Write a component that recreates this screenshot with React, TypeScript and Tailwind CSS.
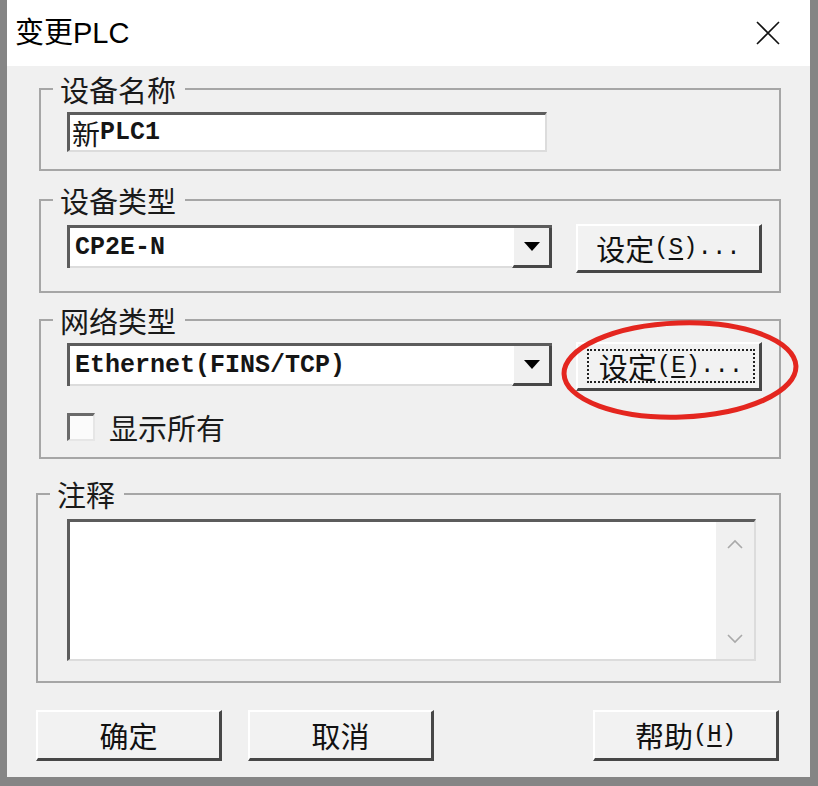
import React from "react";

const CJK = "font-['Noto_Sans_CJK_SC',sans-serif]";
const MONO = "font-['Liberation_Mono','Noto_Sans_CJK_SC',monospace]";

function Legend({ children }: { children: React.ReactNode }) {
  return (
    <legend
      className={`ml-[12px] pl-[7px] pr-[9px] text-[29px] leading-[30px] text-[#1a1a1a] ${CJK}`}
    >
      {children}
    </legend>
  );
}

function Combo({ value }: { value: string }) {
  return (
    <div className="mt-[1px] flex h-[43px] w-[485px] border-t-[3px] border-l-[3px] border-[#5c5c5c]">
      <div
        className={`flex flex-1 items-center bg-white pl-[5px] pt-[2px] border-b-2 border-[#dcdcdc] text-[25px] font-bold text-[#151515] ${MONO}`}
      >
        {value}
      </div>
      <div className="flex w-[40px] items-center justify-center bg-[#f0f0f0] border-l-2 border-l-white border-r-[3px] border-b-[3px] border-r-[#474747] border-b-[#474747]">
        <svg width="16" height="9" viewBox="0 0 16 9">
          <path d="M0 0H16L8 9Z" fill="#000" />
        </svg>
      </div>
    </div>
  );
}

function Chevron({ up }: { up?: boolean }) {
  return (
    <svg width="16" height="10" viewBox="0 0 16 10">
      <polyline
        points={up ? "1,9 8,2 15,9" : "1,1 8,8 15,1"}
        fill="none"
        stroke="#a9a9a9"
        strokeWidth="1.6"
      />
    </svg>
  );
}

export default function App() {
  return (
    <div className="flex h-[786px] w-[818px] flex-col overflow-hidden border-l-[7px] border-r-[8px] border-b-[9px] border-[#858585] bg-[#f0f0f0]">
      {/* Title bar */}
      <div className="flex h-[66px] shrink-0 items-center justify-between bg-white pl-[8px] pr-[30px]">
        <div
          className={`text-[29px] leading-none text-black font-['Liberation_Sans','Noto_Sans_CJK_SC',sans-serif]`}
        >
          变更PLC
        </div>
        <svg width="24" height="24" viewBox="0 0 24 24">
          <path d="M1 1L23 23M23 1L1 23" stroke="#111" strokeWidth="1.6" />
        </svg>
      </div>

      <div className="flex flex-1 flex-col pl-[32px] pr-[29px]">
        {/* 设备名称 */}
        <fieldset className="mt-[8px] border-2 border-[#a6a6a6]">
          <Legend>设备名称</Legend>
          <div className="pt-[8px] pl-[26px] pb-[17px]">
            <div
              className={`flex h-[40px] w-[480px] items-center bg-white pl-[2px] border-t-[3px] border-l-[3px] border-r-2 border-b-2 border-t-[#5c5c5c] border-l-[#5c5c5c] border-r-[#dcdcdc] border-b-[#dcdcdc] text-[25px] font-bold text-[#151515] ${MONO}`}
            >
              <span className={`text-[28px] font-normal leading-none ${CJK}`}>新</span>
              <span>PLC1</span>
            </div>
          </div>
        </fieldset>

        {/* 设备类型 */}
        <fieldset className="mt-[14px] border-2 border-[#a6a6a6]">
          <Legend>设备类型</Legend>
          <div className="flex items-start gap-[24px] pt-[9px] pl-[26px] pb-[18px]">
            <Combo value="CP2E-N" />
            <div className="flex h-[49px] w-[186px] items-center justify-center bg-[#f2f2f2] border-t-2 border-l-2 border-t-white border-l-white border-r-[3px] border-b-[3px] border-r-[#474747] border-b-[#474747] text-[#111]">
              <span className={`text-[29px] leading-none ${CJK}`}>设定</span>
              <span className={`text-[24px] leading-none ${MONO}`}>
                (<span className="underline underline-offset-4">S</span>)...
              </span>
            </div>
          </div>
        </fieldset>

        {/* 网络类型 */}
        <fieldset className="mt-[12px] border-2 border-[#a6a6a6]">
          <Legend>网络类型</Legend>
          <div className="pt-[7px] pl-[26px] pb-[15px]">
            <div className="flex items-start gap-[24px]">
              <Combo value="Ethernet(FINS/TCP)" />
              <div className="relative">
                <div className="flex h-[49px] w-[186px] bg-[#f2f2f2] border-t-2 border-l-2 border-t-white border-l-white border-r-[3px] border-b-[3px] border-r-[#474747] border-b-[#474747] pt-[5px] pl-[9px] pr-[4px] pb-[5px] text-[#111]">
                  <div className="flex flex-1 items-center justify-center border-2 border-dotted border-[#222]">
                    <span className={`text-[29px] leading-none ${CJK}`}>设定</span>
                    <span className={`text-[24px] leading-none ${MONO}`}>
                      (<span className="underline underline-offset-4">E</span>)...
                    </span>
                  </div>
                </div>
                <svg
                  className="pointer-events-none absolute left-[-20px] top-[-30px]"
                  width="250"
                  height="112"
                  viewBox="0 0 250 112"
                >
                  <ellipse
                    cx="124"
                    cy="58"
                    rx="116"
                    ry="47"
                    fill="none"
                    stroke="#e4261f"
                    strokeWidth="5"
                    transform="rotate(-2 124 58)"
                  />
                </svg>
              </div>
            </div>
            <div className="mt-[21px] flex items-center gap-[14px]">
              <div className="h-[28px] w-[28px] bg-[#fbfbfb] border-t-[3px] border-l-[3px] border-r-2 border-b-2 border-t-[#6a6a6a] border-l-[#6a6a6a] border-r-[#e6e6e6] border-b-[#e6e6e6]" />
              <span className={`text-[29px] leading-[30px] text-[#1a1a1a] ${CJK}`}>
                显示所有
              </span>
            </div>
          </div>
        </fieldset>

        {/* 注释 */}
        <fieldset className="mt-[20px] ml-[-3px] border-2 border-[#a6a6a6]">
          <Legend>注释</Legend>
          <div className="pt-[10px] pl-[29px] pb-[20px]">
            <div className="flex h-[142px] w-[689px] border-t-[3px] border-l-[3px] border-r-2 border-b-2 border-t-[#5c5c5c] border-l-[#5c5c5c] border-r-[#dcdcdc] border-b-[#dcdcdc] bg-white">
              <div className="flex-1 bg-white" />
              <div className="flex w-[38px] flex-col items-center justify-between bg-[#f0f0f0] pt-[17px] pb-[15px]">
                <Chevron up />
                <Chevron />
              </div>
            </div>
          </div>
        </fieldset>

        {/* Buttons */}
        <div className="mt-[27px] ml-[-3px] mr-[2px] flex items-start gap-[26px]">
          <div className="flex h-[51px] w-[186px] items-center justify-center bg-[#f2f2f2] border-t-2 border-l-2 border-t-white border-l-white border-r-[3px] border-b-[3px] border-r-[#474747] border-b-[#474747] text-[#111]">
            <span className={`text-[29px] leading-none ${CJK}`}>确定</span>
          </div>
          <div className="flex h-[51px] w-[186px] items-center justify-center bg-[#f2f2f2] border-t-2 border-l-2 border-t-white border-l-white border-r-[3px] border-b-[3px] border-r-[#474747] border-b-[#474747] text-[#111]">
            <span className={`text-[29px] leading-none ${CJK}`}>取消</span>
          </div>
          <div className="ml-auto flex h-[51px] w-[186px] items-center justify-center bg-[#f2f2f2] border-t-2 border-l-2 border-t-white border-l-white border-r-[3px] border-b-[3px] border-r-[#474747] border-b-[#474747] text-[#111]">
            <span className={`text-[29px] leading-none ${CJK}`}>帮助</span>
            <span className={`text-[24px] leading-none ${MONO}`}>
              (<span className="underline underline-offset-4">H</span>)
            </span>
          </div>
        </div>
      </div>
    </div>
  );
}
